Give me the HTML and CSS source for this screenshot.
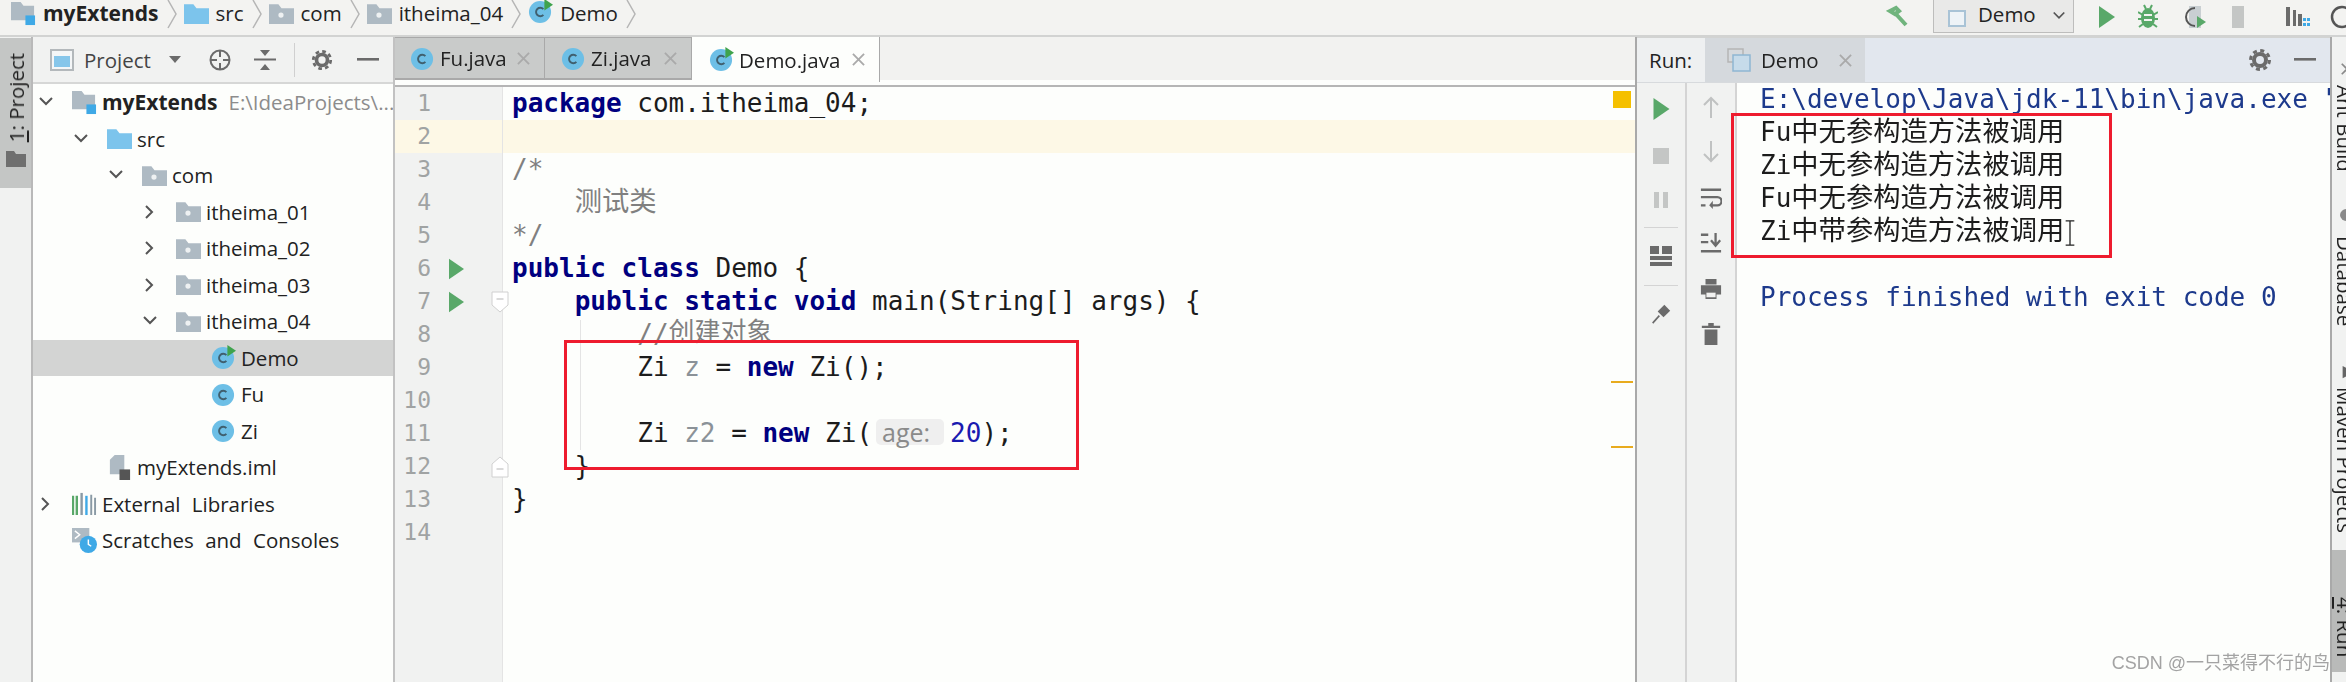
FILE: index.html
```html
<!DOCTYPE html>
<html lang="en">
<head>
<meta charset="utf-8">
<title>myExtends - Demo.java</title>
<link rel="stylesheet" href="styles.css">
</head>
<body>
<svg class="defs" aria-hidden="true">
  <symbol id="folder" viewBox="0 0 24 20"><path d="M0 1h9l3 4h12v15H0z" fill="#aebac3"/><rect x="9" y="9" width="5" height="5" rx="2.5" fill="#eef1f2"/></symbol>
  <symbol id="src" viewBox="0 0 24 20"><path d="M0 1h9l3 4h12v15H0z" fill="#7cc4ec"/></symbol>
  <symbol id="module" viewBox="0 0 26 26"><path d="M0 1h10l3 4h11v15H0z" fill="#aebac3"/><rect x="15" y="15" width="10" height="10" fill="#3fa9e6"/></symbol>
  <symbol id="cls" viewBox="0 0 26 26"><circle cx="12.5" cy="13.5" r="11.5" fill="#6dbfe6"/><path d="M16 10.5a4.4 4.4 0 1 0 0 6" fill="none" stroke="#40606f" stroke-width="2"/></symbol>
  <symbol id="clsrun" viewBox="0 0 26 26"><circle cx="12.5" cy="13.5" r="11.5" fill="#6dbfe6"/><path d="M16 10.5a4.4 4.4 0 1 0 0 6" fill="none" stroke="#40606f" stroke-width="2"/><path d="M17 0l9 6-9 6z" fill="#3fa34d"/></symbol>
  <symbol id="chev-d" viewBox="0 0 16 16"><path d="M2 4l6 6 6-6" fill="none" stroke="#555" stroke-width="2"/></symbol>
  <symbol id="chev-r" viewBox="0 0 16 16"><path d="M4 2l6 6-6 6" fill="none" stroke="#555" stroke-width="2"/></symbol>
  <symbol id="gear" viewBox="0 0 24 24"><circle cx="12" cy="12" r="6" fill="none" stroke="#6b6b6b" stroke-width="4"/><circle cx="12" cy="12" r="9.5" fill="none" stroke="#6b6b6b" stroke-width="3" stroke-dasharray="4 3.45"/></symbol>
  <symbol id="minus" viewBox="0 0 22 4"><rect width="22" height="2.6" fill="#6b6b6b"/></symbol>
  <symbol id="play" viewBox="0 0 16 22"><path d="M0 0l16 11L0 22z" fill="#59a869"/></symbol>
  <symbol id="close" viewBox="0 0 14 14"><path d="M1 1l12 12M13 1L1 13" stroke="#aaa" stroke-width="2"/></symbol>
  <symbol id="fold" viewBox="0 0 18 22"><path d="M1 1h16v13l-8 7-8-7z" fill="#fff" stroke="#d0d0d0"/><path d="M5.500 8h7" stroke="#b5b5b5"/></symbol>
  <symbol id="foldend" viewBox="0 0 18 22"><path d="M1 21h16V8l-8-7-8 7z" fill="#fff" stroke="#d0d0d0"/><path d="M5.500 13h7" stroke="#b5b5b5"/></symbol>
</svg>

<div class="app">
  <header class="topbar">
    <div class="crumb"><svg class="ic-crumb"><use href="#module"/></svg><b>myExtends</b></div>
    <svg class="sep" viewBox="0 0 10 36"><path d="M1 2l8 14-8 14" fill="none" stroke="#b5b5b5" stroke-width="1.500"/></svg>
    <div class="crumb"><svg class="ic-crumb"><use href="#src"/></svg>src</div>
    <svg class="sep" viewBox="0 0 10 36"><path d="M1 2l8 14-8 14" fill="none" stroke="#b5b5b5" stroke-width="1.500"/></svg>
    <div class="crumb"><svg class="ic-crumb"><use href="#folder"/></svg>com</div>
    <svg class="sep" viewBox="0 0 10 36"><path d="M1 2l8 14-8 14" fill="none" stroke="#b5b5b5" stroke-width="1.500"/></svg>
    <div class="crumb"><svg class="ic-crumb"><use href="#folder"/></svg>itheima_04</div>
    <svg class="sep" viewBox="0 0 10 36"><path d="M1 2l8 14-8 14" fill="none" stroke="#b5b5b5" stroke-width="1.500"/></svg>
    <div class="crumb"><svg class="ic-crumb-c"><use href="#clsrun"/></svg>Demo</div>
    <svg class="sep" viewBox="0 0 10 36"><path d="M1 2l8 14-8 14" fill="none" stroke="#b5b5b5" stroke-width="1.500"/></svg>

    <div class="tools">
      <svg class="t-hammer" viewBox="0 0 24 24"><path d="M4 6l6-3 3 3-4 3zM9 8l11 12" fill="none" stroke="#59a869" stroke-width="4"/></svg>
      <div class="combo"><svg class="combo-ic" viewBox="0 0 20 22"><rect x="1" y="6" width="16" height="15" fill="#eef3f7" stroke="#a9c3d6" stroke-width="2"/></svg><span class="combo-txt">Demo</span><svg class="combo-chev"><use href="#chev-d"/></svg></div>
      <svg class="t-run"><use href="#play"/></svg>
      <svg class="t-bug" viewBox="0 0 20 26"><ellipse cx="10" cy="14" rx="7" ry="10" fill="#59a869"/><path d="M0 8l5 3M20 8l-5 3M0 15h4M20 15h-4M1 23l4-3M19 23l-4-3M6 1l2 4M14 1l-2 4" stroke="#59a869" stroke-width="2"/><path d="M6 11h8M6 16h8" stroke="#f3f3f1" stroke-width="2"/></svg>
      <svg class="t-cov" viewBox="0 0 24 26"><path d="M6 2h12v22H6z" fill="#c9cfd2"/><path d="M12 4a9 9 0 0 0 0 18" fill="none" stroke="#555" stroke-width="2"/><path d="M14 12l9 6-9 6z" fill="#59a869"/></svg>
      <svg class="t-stop" viewBox="0 0 12 22"><rect width="12" height="22" fill="#c4c6c5"/></svg>
      <svg class="t-struct" viewBox="0 0 26 26"><path d="M1 3h4v19H1zM8 6h3v16H8zM13 10h4v12h-4z" fill="#6b6b6b"/><path d="M18 14h3v3h-3zM22 14h3v3h-3zM18 19h3v3h-3zM22 19h3v3h-3z" fill="#3fa9e6"/></svg>
      <svg class="t-search" viewBox="0 0 16 24"><circle cx="12" cy="12" r="10" fill="none" stroke="#555" stroke-width="2.500"/></svg>
    </div>
  </header>

  <main class="main">
    <aside class="stripe-left">
      <div class="vtab-left"><span class="vtab-left-txt"><u>1</u>: Project</span><svg class="vtab-left-ic" viewBox="0 0 20 16"><path d="M0 0h8l2 3h10v13H0z" fill="#6f6f6f"/></svg></div>
    </aside>

    <section class="project">
      <div class="ph">
        <svg class="ph-ic" viewBox="0 0 24 22"><rect x="1" y="1" width="22" height="20" fill="#f4f6f7" stroke="#b3b8bb" stroke-width="2"/><rect x="4" y="7" width="16" height="11" fill="#86c6ea"/></svg>
        <span class="ph-title">Project</span>
        <svg class="ph-drop" viewBox="0 0 12 7"><path d="M0 0h12L6 7z" fill="#6b6b6b"/></svg>
        <svg class="ph-locate" viewBox="0 0 22 22"><circle cx="11" cy="11" r="9.500" fill="none" stroke="#6b6b6b" stroke-width="2"/><path d="M11 2v6M11 14v6M2 11h6M14 11h6" stroke="#6b6b6b" stroke-width="2"/></svg>
        <svg class="ph-collapse" viewBox="0 0 22 22"><path d="M0 10.500h22" stroke="#6b6b6b" stroke-width="2"/><path d="M6 1h10l-5 6zM6 21h10l-5-6z" fill="#6b6b6b"/></svg>
        <i class="ph-div"></i>
        <svg class="ph-gear"><use href="#gear"/></svg>
        <svg class="ph-min"><use href="#minus"/></svg>
      </div>
      <ul class="tree">
        <li class="row l0"><svg class="chev"><use href="#chev-d"/></svg><svg class="ic"><use href="#module"/></svg><b>myExtends</b><span class="path">E:\IdeaProjects\...</span></li>
        <li class="row l1"><svg class="chev"><use href="#chev-d"/></svg><svg class="ic"><use href="#src"/></svg>src</li>
        <li class="row l2"><svg class="chev"><use href="#chev-d"/></svg><svg class="ic"><use href="#folder"/></svg>com</li>
        <li class="row l3"><svg class="chev"><use href="#chev-r"/></svg><svg class="ic"><use href="#folder"/></svg>itheima_01</li>
        <li class="row l3"><svg class="chev"><use href="#chev-r"/></svg><svg class="ic"><use href="#folder"/></svg>itheima_02</li>
        <li class="row l3"><svg class="chev"><use href="#chev-r"/></svg><svg class="ic"><use href="#folder"/></svg>itheima_03</li>
        <li class="row l3"><svg class="chev"><use href="#chev-d"/></svg><svg class="ic"><use href="#folder"/></svg>itheima_04</li>
        <li class="row l4 sel"><svg class="chev"></svg><svg class="ic"><use href="#clsrun"/></svg>Demo</li>
        <li class="row l4"><svg class="chev"></svg><svg class="ic"><use href="#cls"/></svg>Fu</li>
        <li class="row l4"><svg class="chev"></svg><svg class="ic"><use href="#cls"/></svg>Zi</li>
        <li class="row l1"><svg class="chev"></svg><svg class="ic" viewBox="0 0 26 26"><path d="M3 5l5-5h10v20H3z" fill="#aebac3"/><rect x="13" y="15" width="11" height="11" fill="#555"/></svg>myExtends.iml</li>
        <li class="row l0"><svg class="chev"><use href="#chev-r"/></svg><svg class="ic" viewBox="0 0 26 24"><path d="M1 4v20M5 4v20" stroke="#59a869" stroke-width="2.500"/><path d="M10 1v23" stroke="#8a9aa5" stroke-width="2.500"/><path d="M15 4v20" stroke="#3fa9e6" stroke-width="2.500"/><path d="M20 3v21M24 6v18" stroke="#8a9aa5" stroke-width="2"/></svg>External Libraries</li>
        <li class="row l0"><svg class="chev"></svg><svg class="ic" viewBox="0 0 26 26"><rect y="0" width="18" height="15" fill="#aebac3"/><path d="M3 3l5 4-5 4" fill="none" stroke="#fff" stroke-width="1.500"/><circle cx="17" cy="17" r="9" fill="#3fa9e6"/><path d="M17 12v5l3 2" fill="none" stroke="#fff" stroke-width="1.500"/></svg>Scratches and Consoles</li>
      </ul>
    </section>

    <section class="editor">
      <nav class="tabs">
        <div class="tab tab-fu"><svg class="tab-ic"><use href="#cls"/></svg><span class="tab-txt">Fu.java</span><svg class="tab-x"><use href="#close"/></svg></div>
        <div class="tab tab-zi"><svg class="tab-ic"><use href="#cls"/></svg><span class="tab-txt">Zi.java</span><svg class="tab-x"><use href="#close"/></svg></div>
        <div class="tab tab-demo"><svg class="tab-ic"><use href="#clsrun"/></svg><span class="tab-txt">Demo.java</span><svg class="tab-x"><use href="#close"/></svg></div>
      </nav>
      <div class="ed-body">
        <div class="gutter">
          <div class="gl"><span class="num">1</span></div>
          <div class="gl cur"><span class="num">2</span></div>
          <div class="gl"><span class="num">3</span></div>
          <div class="gl"><span class="num">4</span></div>
          <div class="gl"><span class="num">5</span></div>
          <div class="gl"><span class="num">6</span><svg class="g-run"><use href="#play"/></svg></div>
          <div class="gl"><span class="num">7</span><svg class="g-run"><use href="#play"/></svg><svg class="g-fold"><use href="#fold"/></svg></div>
          <div class="gl"><span class="num">8</span></div>
          <div class="gl"><span class="num">9</span></div>
          <div class="gl"><span class="num">10</span></div>
          <div class="gl"><span class="num">11</span></div>
          <div class="gl"><span class="num">12</span><svg class="g-spacer"></svg><svg class="g-fold"><use href="#foldend"/></svg></div>
          <div class="gl"><span class="num">13</span></div>
          <div class="gl"><span class="num">14</span></div>
        </div>
        <div class="code">
          <div class="cl"><span class="kw">package</span> com.itheima_04;</div>
          <div class="cl cur"></div>
          <div class="cl cm">/*</div>
          <div class="cl cm">    <span class="cjk">测试类</span></div>
          <div class="cl cm">*/</div>
          <div class="cl"><span class="kw">public class</span> Demo {</div>
          <div class="cl">    <span class="kw">public static void</span> main(String[] args) {</div>
          <div class="cl cm">        //<span class="cjk-s">创建对象</span></div>
          <div class="cl">        Zi <span class="var">z</span> = <span class="kw">new</span> Zi();</div>
          <div class="cl"></div>
          <div class="cl">        Zi <span class="var">z2</span> = <span class="kw">new</span> Zi(<span class="hint">age:</span><span class="lit">20</span>);</div>
          <div class="cl">    }</div>
          <div class="cl">}</div>
          <div class="cl"></div>
        </div>
        <i class="guide"></i>
        <i class="mark-ok"></i>
        <i class="mark mark-a"></i>
        <i class="mark mark-b"></i>
        <i class="redbox redbox-code"></i>
      </div>
    </section>

    <section class="run">
      <div class="run-head">
        <span class="run-label">Run:</span>
        <div class="run-tab"><svg class="run-tab-ic" viewBox="0 0 24 24"><rect x="1" y="1" width="15" height="13" fill="none" stroke="#b5b5b5" stroke-width="1.500"/><rect x="6" y="7" width="17" height="16" fill="#c6dbea" stroke="#8fb6d2" stroke-width="1.500"/></svg><span>Demo</span><svg class="tab-x run-x"><use href="#close"/></svg></div>
        <svg class="run-gear"><use href="#gear"/></svg>
        <svg class="run-min"><use href="#minus"/></svg>
      </div>
      <div class="run-body">
        <div class="bar bar-a">
          <svg class="b-play"><use href="#play"/></svg>
          <svg class="b-ic" viewBox="0 0 16 16"><rect width="16" height="16" fill="#c4c6c5"/></svg>
          <svg class="b-ic" viewBox="0 0 16 16"><path d="M1 0h5v16H1zM10 0h5v16h-5z" fill="#c4c6c5"/></svg>
          <i class="b-sep"></i>
          <svg class="b-ic b-wide" viewBox="0 0 22 20"><path d="M0 0h9v8H0zM12 0h10v8H12zM0 10h22v4H0zM0 16h22v4H0z" fill="#6b6b6b"/></svg>
          <i class="b-sep"></i>
          <svg class="b-ic b-wide" viewBox="0 0 22 24"><path d="M1 23l8-9" stroke="#6b6b6b" stroke-width="2"/><path d="M7 9l8-8 7 7-8 8z" fill="#6b6b6b"/></svg>
        </div>
        <div class="bar bar-b">
          <svg class="c-ic" viewBox="0 0 18 22"><path d="M9 2v20M2 9l7-7 7 7" fill="none" stroke="#c0c2c2" stroke-width="2"/></svg>
          <svg class="c-ic" viewBox="0 0 18 22"><path d="M9 0v20M2 13l7 7 7-7" fill="none" stroke="#c0c2c2" stroke-width="2"/></svg>
          <svg class="c-ic" viewBox="0 0 24 24"><path d="M1 3h22M1 11h18a4 4 0 0 1 0 9h-7M1 20h5" fill="none" stroke="#6b6b6b" stroke-width="2.500"/><path d="M14 15l-4 5 4 4z" fill="#6b6b6b"/></svg>
          <svg class="c-ic" viewBox="0 0 24 24"><path d="M1 3h8M1 11h8M1 21h22M17 1v13M12 9l5 6 5-6" fill="none" stroke="#6b6b6b" stroke-width="2.500"/></svg>
          <svg class="c-ic" viewBox="0 0 24 24"><path d="M6 1h12v6H6zM1 8h22v10H1zM6 15h12v8H6z" fill="#6b6b6b"/><path d="M7 16h10v5H7z" fill="#f1f1f0"/></svg>
          <svg class="c-ic" viewBox="0 0 20 24"><path d="M3 7h14v17H3zM0 3h20v2.500H0zM7 0h6v3H7z" fill="#6b6b6b"/></svg>
        </div>
        <div class="console">
          <div class="out sys">E:\develop\Java\jdk-11\bin\java.exe "...</div>
          <div class="out">Fu<span class="cjk">中无参构造方法被调用</span></div>
          <div class="out">Zi<span class="cjk">中无参构造方法被调用</span></div>
          <div class="out">Fu<span class="cjk">中无参构造方法被调用</span></div>
          <div class="out">Zi<span class="cjk">中带参构造方法被调用</span><svg class="ibeam" viewBox="0 0 12 30"><path d="M1 1h10M6 1v28M1 29h10" fill="none" stroke="#222" stroke-width="1.500"/></svg></div>
          <div class="out"></div>
          <div class="out sys">Process finished with exit code 0</div>
        </div>
        <i class="redbox redbox-out"></i>
      </div>
    </section>

    <aside class="stripe-right">
      <div class="vr vr-ant"><svg class="vr-ic" viewBox="0 0 16 16"><path d="M2 2l12 12M14 2L2 14" stroke="#8a8a8a" stroke-width="2"/></svg><span>Ant Build</span></div>
      <div class="vr vr-db"><svg class="vr-ic" viewBox="0 0 16 16"><ellipse cx="8" cy="8" rx="8" ry="7" fill="#8a8a8a"/></svg><span>Database</span></div>
      <div class="vr vr-mvn"><svg class="vr-ic" viewBox="0 0 16 16"><path d="M3 1l11 6v3L3 15z" fill="#666"/></svg><span>Maven Projects</span></div>
      <div class="vr vr-run"><svg class="vr-ic" viewBox="0 0 16 16"><path d="M8 2l8 12H8z" fill="#777"/></svg><span><u>4</u>: Run</span></div>
    </aside>
  </main>
  <div class="watermark">CSDN @一只菜得不行的鸟</div>
</div>
</body>
</html>
```
FILE: styles.css
```css
* { box-sizing: border-box; }
html, body { margin: 0; padding: 0; background: #fdfefc; overflow: hidden; }
.defs { position: absolute; width: 0; height: 0; }
svg { display: block; flex: none; overflow: hidden; }
ul { list-style: none; margin: 0; padding: 0; }
b { font-weight: 700; font-size: 21px; }

.app {
  position: relative;
  width: 2346px;
  height: 682px;
  display: flex;
  flex-direction: column;
  overflow: hidden;
  font: 20.5px/24px "Open Sans", "Noto Sans", "Noto Sans CJK SC", sans-serif;
  word-spacing: 6px;
  color: #222;
  filter: blur(0.4px);
}

/* top bar */
.topbar {
  height: 37px;
  flex: none;
  display: flex;
  align-items: flex-start;
  padding-left: 11px;
  padding-top: 1px;
  background: #f3f3f1;
  border-bottom: 2px solid #d2d3d2;
  overflow: hidden;
}
.crumb { display: flex; align-items: center; gap: 7px; height: 24px; }
.ic-crumb { width: 25px; height: 25px; }
.ic-crumb-c { width: 25px; height: 25px; margin-top: -4px; }
.sep { width: 10px; height: 36px; margin: -3px 7px 0 8px; }

.tools { margin-left: auto; display: flex; align-items: center; height: 31px; }
.t-hammer { width: 24px; height: 24px; opacity: .85; }
.combo {
  width: 141px; height: 33px; margin-left: 23px;
  display: flex; align-items: center;
  padding-left: 14px;
  background: #e9e9e8;
  border: 1px solid #bdbdbc; border-top: 0;
}
.combo-ic { width: 20px; height: 22px; }
.combo-txt { margin-left: 10px; line-height: 24px; margin-top: -4px; }
.combo-chev { width: 14px; height: 14px; margin-left: 16px; }
.t-run { width: 16px; height: 22px; margin-left: 25px; }
.t-bug { width: 20px; height: 26px; margin-left: 23px; }
.t-cov { width: 24px; height: 26px; margin-left: 25px; }
.t-stop { width: 12px; height: 22px; margin-left: 25px; }
.t-struct { width: 26px; height: 26px; margin-left: 41px; }
.t-search { width: 16px; height: 24px; margin-left: 19px; }

/* main */
.main { flex: 1; display: flex; min-height: 0; }

.stripe-left {
  width: 33px; flex: none;
  background: #f1f2f1;
  border-right: 2px solid #b9b9b9;
  padding-top: 1px;
}
.vtab-left {
  height: 150px;
  background: #c4c6c5;
  display: flex; flex-direction: column; align-items: center;
  padding-top: 15px;
}
.vtab-left-txt {
  writing-mode: vertical-rl; transform: rotate(180deg);
  line-height: 26px; color: #222; word-spacing: 0;
}
.vtab-left-ic { width: 20px; height: 16px; margin-top: 9px; }

/* project tool window */
.project { width: 360px; flex: none; background: #fdfefc; overflow: hidden; }
.ph {
  height: 47px; display: flex; align-items: center;
  padding-left: 17px;
  background: #f1f2f1; border-bottom: 2px solid #d6d7d6;
  color: #444;
}
.ph-ic { width: 24px; height: 22px; }
.ph-title { margin-left: 10px; }
.ph-drop { width: 12px; height: 7px; margin-left: 18px; }
.ph-locate { width: 22px; height: 22px; margin-left: 28px; }
.ph-collapse { width: 22px; height: 22px; margin-left: 23px; }
.ph-div { width: 1px; height: 34px; margin-left: 18px; background: #d0d0d0; }
.ph-gear { width: 22px; height: 22px; margin-left: 16px; }
.ph-min { width: 22px; height: 4px; margin-left: 24px; }

.row { height: 36.5px; display: flex; align-items: center; white-space: pre; }
.l0 { padding-left: 5px; }
.l1 { padding-left: 40px; }
.l2 { padding-left: 75px; }
.l3 { padding-left: 109px; }
.l4 { padding-left: 144px; }
.chev { width: 16px; height: 16px; margin-right: 18px; }
.ic { width: 25px; height: 25px; margin-right: 5px; }
.sel { background: #d3d4d3; }
.path { color: #8c8c8c; margin-left: 11px; }

/* editor */
.editor { width: 1244px; flex: none; border-left: 2px solid #c2c2c2; border-right: 2px solid #a9a9a9; display: flex; flex-direction: column; min-width: 0; }
.tabs {
  height: 50px; flex: none; display: flex; align-items: flex-start;
  background: linear-gradient(#f2f2f0 0 43px, #fdfefc 43px 48px, #b5b5b5 48px);
}
.tab {
  height: 43px; display: flex; align-items: center;
  background: #c9cbca;
  border: 1px solid #a9a9a9; border-left: 0; border-bottom-width: 2px;
  padding-left: 15px; padding-right: 14px;
}
.tab-fu { width: 150px; }
.tab-zi { width: 147px; padding-left: 16px; }
.tab-demo { width: 188px; padding-left: 17px; background: #fdfefc; border-bottom: 0; border-top: 0; height: 45px; }
.tab-ic { width: 25px; height: 25px; }
.tab-txt { margin-left: 5px; }
.tab-x { width: 13px; height: 13px; margin-left: auto; }

.ed-body { flex: 1; display: flex; position: relative; min-height: 0; background: #fdfefc; }
.gutter { width: 108px; flex: none; background: #f1f2f1; border-right: 1px solid #e4e4e4; }
.gl {
  height: 33px; display: flex; align-items: center;
  font: 23px/33px "DejaVu Sans Mono", monospace; color: #a0a3a3;
}
.gl.cur { background: #fdf8e6; }
.num { width: 36px; text-align: right; flex: none; }
.g-run { width: 15px; height: 22px; margin-left: 18px; }
.g-spacer { width: 15px; height: 22px; margin-left: 18px; }
.g-fold { width: 18px; height: 22px; margin-left: 27px; position: relative; z-index: 1; }

.code {
  flex: 1; min-width: 0; padding-left: 0;
  font: 26px/33px "DejaVu Sans Mono", "Noto Sans CJK SC", monospace;
  word-spacing: 0;
  color: #1c1c1c;
}
.cl { height: 33px; padding-left: 9px; white-space: pre; }
.cl.cur { background: #fdf8e6; }
.kw { color: #000080; font-weight: 700; }
.cm { color: #808080; }
.var { color: #8b9298; }
.lit { color: #1a1ab0; }
.cjk { font: 27.3px/20px "Noto Sans CJK SC", sans-serif; }
.cjk-s { font: 26px/20px "Noto Sans CJK SC", sans-serif; vertical-align: 2px; }
.hint {
  display: inline-block;
  height: 26px;
  width: 68px; margin: 0 6px 0 4px;
  padding-left: 6px;
  font: 25px/26px "Open Sans", sans-serif;
  color: #8a8a8a; background: #efefef; border-radius: 5px;
}
.guide { position: absolute; left: 185px; top: 233px; width: 1px; height: 130px; background: #e4e4e4; }
.mark-ok { position: absolute; right: 4px; top: 4px; width: 18px; height: 17px; background: #f5c000; }
.mark { position: absolute; right: 2px; width: 22px; height: 2px; background: #e8ab1e; }
.mark-a { top: 294px; }
.mark-b { top: 359px; }
.redbox { position: absolute; border: 3px solid #ee1c2e; display: block; }
.redbox-code { left: 169px; top: 253px; width: 515px; height: 130px; }

/* run tool window */
.run { width: 693px; flex: none; display: flex; flex-direction: column; }
.run-head {
  height: 46px; flex: none; display: flex; align-items: center;
  background: #e2e7ee; border-top: 1px solid #d2d3d2; border-bottom: 1px solid #d7dadd;
}
.run-label { width: 68px; height: 100%; padding-left: 12px; line-height: 44px; background: #eef0f1; flex: none; }
.run-tab {
  width: 160px; height: 100%; flex: none;
  display: flex; align-items: center;
  padding-left: 22px;
  background: #d5d9dd;
}
.run-tab-ic { width: 24px; height: 24px; margin-right: 10px; }
.run-x { margin-left: 20px; }
.run-gear { width: 24px; height: 24px; margin-left: auto; }
.run-min { width: 22px; height: 4px; margin: 0 14px 0 22px; }

.run-body { flex: 1; display: flex; position: relative; min-height: 0; }
.bar { width: 50px; flex: none; background: #f1f2f1; border-right: 2px solid #d4d4d4; display: flex; flex-direction: column; align-items: center; }
.bar-a { padding-top: 15px; }
.b-play { width: 17px; height: 22px; }
.b-ic { width: 16px; height: 16px; margin-top: 28px; }
.b-wide { width: 22px; height: 20px; margin-top: 0; }
.b-sep { display: block; width: 34px; height: 1px; background: #d4d4d4; margin: 19px 0 18px; }
.bar-b { padding-top: 13px; gap: 23.4px; }
.c-ic { width: 22px; height: 22px; }
.console {
  flex: 1; min-width: 0; padding-left: 23px; background: #fdfefc;
  font: 26px/33px "DejaVu Sans Mono", "Noto Sans CJK SC", monospace;
  word-spacing: 0;
  color: #1c1c1c; overflow: hidden;
}
.out { height: 33px; white-space: pre; }
.sys { color: #1d3a8c; }
.ibeam { display: inline-block; width: 12px; height: 26px; vertical-align: -6px; }
.redbox-out { left: 94px; top: 30px; width: 381px; height: 145px; }

/* right stripe */
.stripe-right {
  width: 16px; flex: none;
  background: #f1f2f1;
  border-left: 2px solid #a9a9a9;
  overflow: hidden;
  position: relative;
}
.vr {
  display: flex; flex-direction: column; align-items: flex-start;
  padding-left: 2px;
}
.vr span { writing-mode: vertical-rl; line-height: 22px; white-space: nowrap; color: #222; word-spacing: 0; }
.vr-ic { width: 14px; height: 14px; margin-left: 6px; }
.vr-ant { padding-top: 25px; height: 160px; }
.vr-ant .vr-ic { margin-bottom: 9px; }
.vr-db { height: 160px; padding-top: 11px; }
.vr-db .vr-ic { margin-bottom: 14px; }
.vr-mvn { height: 193px; padding-top: 8px; }
.vr-mvn .vr-ic { margin-bottom: 8px; }
.vr-run { height: 122px; background: #b9bab9; padding-top: 25px; }
.vr-run .vr-ic { margin-bottom: 8px; }

.watermark {
  position: absolute; right: 16px; bottom: 7px;
  font: 18px/24px "Liberation Sans", "Noto Sans CJK SC", sans-serif;
  word-spacing: 0;
  color: #a3a3a3;
  white-space: nowrap;
}
```
